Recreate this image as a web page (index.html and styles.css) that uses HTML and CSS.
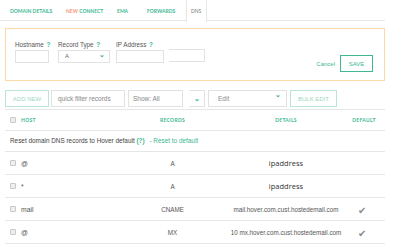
FILE: index.html
```html
<!DOCTYPE html>
<html lang="en">
<head>
    <meta charset="UTF-8">
    <title>DNS</title>
    <link rel="stylesheet" href="styles.css">
</head>
<body>
    <div class="tabs">
        <a class="tab tab-domain">DOMAIN DETAILS</a>
        <a class="tab tab-connect"><span class="new">NEW</span> CONNECT</a>
        <a class="tab tab-email">EMA</a>
        <a class="tab tab-forwards">FORWARDS</a>
        <a class="tab active">DNS</a>
    </div>

    <div class="panel">
        <div class="field field-host">
            <label>Hostname <span class="help">?</span></label>
            <div class="box"></div>
        </div>
        <div class="field field-type">
            <label>Record Type <span class="help">?</span></label>
            <div class="box select">A <span class="chev">&#8964;</span></div>
        </div>
        <div class="field field-ip">
            <label>IP Address <span class="help">?</span></label>
            <div class="ip-boxes">
                <div class="box ip-a"></div>
                <div class="box ip-b"></div>
            </div>
        </div>
        <div class="actions">
            <a class="cancel">Cancel</a>
            <button class="save">SAVE</button>
        </div>
    </div>

    <div class="toolbar">
        <button class="btn-light add">ADD NEW</button>
        <div class="box filter">quick filter records</div>
        <div class="box show">Show: All</div>
        <div class="box show-arrow"><span class="chev">&#8964;</span></div>
        <div class="box edit">Edit <span class="chev">&#8964;</span></div>
        <button class="btn-light bulk">BULK EDIT</button>
    </div>

    <div class="table">
        <div class="row head">
            <div class="cell host"><span class="check"></span>HOST</div>
            <div class="cell rec">RECORDS</div>
            <div class="cell det">DETAILS</div>
            <div class="cell def">DEFAULT</div>
        </div>
        <div class="row reset">
            Reset domain DNS records to Hover default <b class="green">(?)</b>
            <span class="green reset-link">- Reset to default</span>
        </div>
        <div class="row">
            <div class="cell host"><span class="check"></span>@</div>
            <div class="cell rec">A</div>
            <div class="cell det big shift-l">ipaddress</div>
            <div class="cell def"></div>
        </div>
        <div class="row">
            <div class="cell host"><span class="check"></span>*</div>
            <div class="cell rec">A</div>
            <div class="cell det big">ipaddress</div>
            <div class="cell def"></div>
        </div>
        <div class="row">
            <div class="cell host"><span class="check"></span>mail</div>
            <div class="cell rec">CNAME</div>
            <div class="cell det">mail.hover.com.cust.hostedemail.com</div>
            <div class="cell def tick">&#10004;</div>
        </div>
        <div class="row">
            <div class="cell host"><span class="check"></span>@</div>
            <div class="cell rec">MX</div>
            <div class="cell det">10 mx.hover.com.cust.hostedemail.com</div>
            <div class="cell def tick">&#10004;</div>
        </div>
    </div>
</body>
</html>
```

FILE: styles.css
```css
body {
    margin: 0;
    font-family: "Liberation Sans", Arial, sans-serif;
    color: #555;
    background: #fff;
    width: 399px;
}
.tabs {
    display: flex;
    height: 21px;
    width: 385px;
    border-bottom: 1px solid #e6e6e6;
    padding-left: 10px;
    box-sizing: border-box;
}
.tab {
    font-family: Lato, sans-serif;
    font-weight: 700;
    font-size: 5px;
    color: #40b894;
    line-height: 22px;
    white-space: nowrap;
}
.tab-domain { width: 56px; }
.tab-connect { width: 51px; }
.tab-email { width: 30px; }
.tab-forwards { width: 39px; }
.new {
    color: #f7977c;
}
.tab.active {
    color: #777;
    font-weight: 400;
    background: #fff;
    border: 1px solid #e6e6e6;
    border-top: none;
    border-bottom: none;
    height: 22px;
    padding: 0 5px 0 4px;
}
.panel {
    display: flex;
    height: 53px;
    box-sizing: border-box;
    margin: 7px 0 0 5px;
    width: 380px;
    border: 1px solid #fcdaa8;
    padding: 12px 11px 8px 9px;
}
.field {
    display: flex;
    flex-direction: column;
}
.field label {
    font-size: 6.3px;
    line-height: 8px;
    height: 8px;
    margin-bottom: 1px;
    color: #555;
    white-space: nowrap;
}
.help {
    color: #40b894;
    font-weight: 700;
    margin-left: 1px;
}
.box {
    height: 13px;
    box-sizing: border-box;
    border: 1px solid #e2e2e2;
    background: #fff;
    font-size: 6px;
    line-height: 11px;
    color: #666;
}
.field-host { width: 43px; }
.field-host .box { width: 34px; }
.field-type { width: 58px; }
.field-type .box { width: 52px; }
.select {
    display: flex;
    justify-content: space-between;
    padding: 0 4px 0 6px;
}
.chev {
    color: #40b894;
    font-weight: 700;
    font-size: 7px;
    line-height: 8px;
}
.field-ip { width: 90px; }
.ip-boxes {
    display: flex;
    gap: 5px;
}
.ip-a { width: 48px; }
.ip-b { width: 36px; border-left: none; margin-top: -1px; }
.actions {
    margin-left: auto;
    align-self: flex-end;
    display: flex;
    align-items: center;
    gap: 5px;
}
.cancel {
    font-size: 6px;
    color: #40b894;
}
.save {
    font-family: "Liberation Sans", Arial, sans-serif;
    width: 33px;
    height: 17px;
    border: 1px solid #40b894;
    background: #fff;
    color: #40b894;
    font-size: 6px;
    padding: 0;
}
.toolbar {
    display: flex;
    margin: 9px 0 0 5px;
    width: 380px;
    padding-bottom: 2px;
    border-bottom: 1px solid #e6e6e6;
    gap: 3px;
}
.toolbar .box {
    height: 17px;
    line-height: 15px;
    font-size: 6.5px;
    color: #888;
}
.btn-light {
    font-family: "Liberation Sans", Arial, sans-serif;
    height: 17px;
    border: 1px solid #b9e6d6;
    background: #fff;
    color: #9dd8c3;
    font-size: 6px;
    padding: 0;
}
.add { width: 44px; margin-right: -1px; }
.filter { width: 74px; padding-left: 6px; }
.show { width: 55px; padding-left: 4px; color: #666; }
.show-arrow {
    width: 16px;
    margin-left: 3px;
    text-align: right;
    padding-right: 4px;
    border-left: none;
}
.edit {
    width: 79px;
    display: flex;
    justify-content: space-between;
    padding: 0 5px 0 9px;
}
.bulk { width: 47px; }
.table {
    margin-left: 5px;
    width: 380px;
}
.row {
    display: grid;
    grid-template-columns: 145px 45px 151px 36px;
    align-items: center;
    height: 22px;
    border-bottom: 1px solid #e6e6e6;
    font-size: 6.3px;
    color: #555;
}
.row.head {
    height: 20px;
    font-family: Lato, sans-serif;
    font-weight: 700;
    font-size: 5px;
    letter-spacing: 0.3px;
    color: #40b894;
}
.cell.host {
    display: flex;
    align-items: center;
    padding-left: 5px;
    font-size: 6.8px;
}
.row.head .cell.host {
    font-size: 5px;
}
.cell.rec, .cell.def {
    text-align: center;
}
.cell.det {
    padding-left: 31px;
    text-align: center;
    white-space: nowrap;
}
.check {
    width: 4px;
    height: 4px;
    border: 1px solid #c8c8c8;
    background: #efefef;
    border-radius: 1px;
    margin-right: 5px;
}
.row.reset {
    display: block;
    height: 20px;
    line-height: 20px;
    padding-left: 5px;
    font-size: 6.4px;
    color: #444;
}
.green {
    color: #40b894;
}
.reset-link {
    margin-left: 3px;
}
.big {
    font-family: "Open Sans", sans-serif;
    font-size: 7.5px;
    color: #333;
}
.shift-l {
    padding-left: 21px;
}
.cell.tick {
    color: #8a8a8a;
    font-size: 10px;
    line-height: 10px;
    padding: 4px 4px 0 0;
}
```
